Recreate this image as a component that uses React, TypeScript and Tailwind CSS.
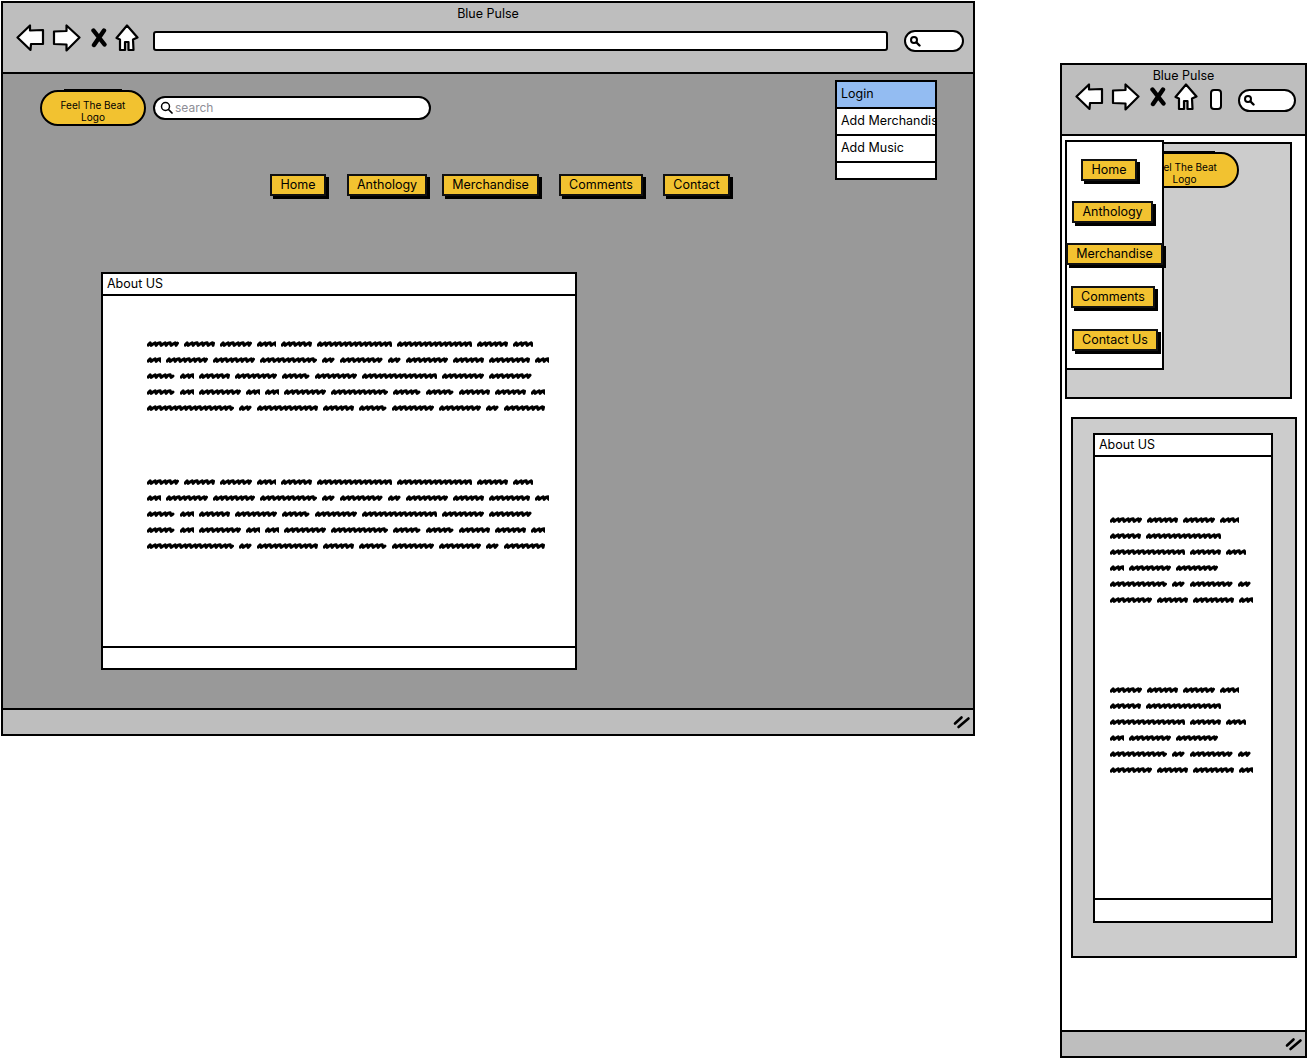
const P1 = [
  [32, 31, 32, 19, 31, 75, 75, 31, 20],
  [14, 42, 42, 57, 13, 43, 13, 42, 31, 41, 14],
  [28, 14, 31, 42, 28, 42, 75, 42, 43],
  [28, 14, 42, 14, 14, 42, 57, 28, 28, 31, 31, 14],
  [87, 13, 61, 31, 28, 42, 42, 13, 41],
];
const P2 = [
  [32, 31, 32, 19],
  [31, 75],
  [75, 31, 20],
  [14, 42, 42],
  [57, 13, 43, 13],
  [42, 31, 41, 14],
];

function Word({ w }: { w: number }) {
  let d = "M1 5.2";
  for (let x = 1; x < w - 2; x += 5) {
    const e = Math.min(x + 5, w - 1.5);
    d += ` L${x + 2.2} 2.8 L${x + 3} 5.4 L${e} ${(x % 2 === 0) ? 3.2 : 4}`;
  }
  return (
    <svg width={w} height={8} viewBox={`0 0 ${w} 8`} className="block">
      <path d={d} fill="none" stroke="#000" strokeWidth="3" strokeLinecap="round" strokeLinejoin="round" />
    </svg>
  );
}

function Scribble({ rows }: { rows: number[][] }) {
  return (
    <div className="flex flex-col gap-[8px]">
      {rows.map((r, i) => (
        <div key={i} className="flex gap-[5px]">
          {r.map((w, j) => (
            <Word key={j} w={w} />
          ))}
        </div>
      ))}
    </div>
  );
}

function Back() {
  return (
    <svg width="29" height="28" viewBox="0 0 29 28" className="block shrink-0">
      <path d="M1.5 13.5 L14 1.5 L14 6.5 L27 6 L27 20 L15 20 L14.5 26 Z" fill="#fff" stroke="#000" strokeWidth="2.2" strokeLinejoin="round" />
    </svg>
  );
}
function Forward() {
  return (
    <svg width="29" height="28" viewBox="0 0 29 28" className="block shrink-0">
      <path d="M27.5 13.5 L14.5 1.5 L14.5 7 L2 7.5 L2 20 L14.5 20.5 L14.5 26.5 Z" fill="#fff" stroke="#000" strokeWidth="2.2" strokeLinejoin="round" />
    </svg>
  );
}
function Stop() {
  return (
    <svg width="16" height="20" viewBox="0 0 16 20" className="block shrink-0">
      <path d="M2.5 2.5 L13.5 16.5 M13 2.5 L3 17" fill="none" stroke="#000" strokeWidth="4.4" strokeLinecap="round" />
    </svg>
  );
}
function Home() {
  return (
    <svg width="24" height="28" viewBox="0 0 24 28" className="block shrink-0">
      <path d="M12 1.5 L22.5 13.5 L18 15.5 L18.5 26 L13.5 26 L13.5 18 L10 18 L10 26 L5 26 L5 15.5 L1.5 14 Z" fill="#fff" stroke="#000" strokeWidth="2.2" strokeLinejoin="round" />
    </svg>
  );
}
function Addr({ className }: { className: string }) {
  return <div className={`bg-white border-2 border-black ${className}`} />;
}
function BrowserSearch({ className }: { className: string }) {
  return (
    <div className={`relative bg-white border-2 border-black rounded-full flex items-center pl-[3px] ${className}`}>
      <svg width="12" height="12" viewBox="0 0 12 12" className="block">
        <circle cx="5" cy="5" r="3" fill="none" stroke="#000" strokeWidth="2" />
        <path d="M7.5 7.5 L10.5 10.5" stroke="#000" strokeWidth="2.4" strokeLinecap="round" />
      </svg>
    </div>
  );
}
function Grip() {
  return (
    <svg width="18" height="14" viewBox="0 0 18 14" className="block">
      <path d="M2 8.5 L8.5 2.5 M5.5 12 L15.5 3.5" fill="none" stroke="#000" strokeWidth="2.6" strokeLinecap="round" />
    </svg>
  );
}
function StatusBar() {
  return (
    <div className="h-[26px] shrink-0 bg-[#bebebe] border-t-2 border-black flex items-center justify-end pr-[2px]">
      <Grip />
    </div>
  );
}
function Btn({ label, className }: { label: string; className: string }) {
  return (
    <div className={`h-[22px] shrink-0 flex items-center justify-center bg-[#f2c230] border-2 border-[#111] shadow-[3px_3px_0_#000] text-[12.5px] leading-none text-black ${className}`}>
      {label}
    </div>
  );
}
function Logo({ className }: { className: string }) {
  return (
    <div className={`relative h-[36px] bg-[#f2c230] border-2 border-black rounded-[18px] flex flex-col items-center justify-center pt-[6px] text-[10px] leading-[12px] text-black ${className}`}>
      <span className="absolute top-[-3px] left-[22px] right-[22px] h-[1px] bg-black" />
      <span>Feel The Beat</span>
      <span>Logo</span>
    </div>
  );
}
function MenuItem({ label, className }: { label: string; className: string }) {
  return (
    <div className={`h-[27px] px-[4px] flex items-center overflow-hidden whitespace-nowrap border-b-2 border-black text-[12.5px] text-black ${className}`}>
      {label}
    </div>
  );
}
function AboutTitle() {
  return (
    <div className="h-[22px] shrink-0 bg-white border-b-2 border-black pl-[4px] pt-[1px] flex items-center text-[12.5px] text-black">
      About US
    </div>
  );
}

export default function App() {
  return (
    <div className="relative w-[1308px] h-[1059px] bg-white overflow-hidden font-['Inter',sans-serif]">
      {/* Desktop window */}
      <div className="absolute left-[1px] top-[1px] w-[974px] h-[735px] border-2 border-black flex flex-col">
        <div className="h-[71px] shrink-0 bg-[#bebebe] border-b-2 border-black">
          <div className="pt-[3px] h-[20px] text-center text-[12.5px] leading-[15px] text-black">Blue Pulse</div>
          <div className="flex items-center pl-[13px] h-[28px] mt-[1px]">
            <Back />
            <div className="ml-[7px]"><Forward /></div>
            <div className="ml-[10px]"><Stop /></div>
            <div className="ml-[8px]"><Home /></div>
            <Addr className="ml-[14px] mt-[5px] w-[735px] h-[20px] rounded-[3px]" />
            <BrowserSearch className="ml-[16px] mt-[5px] w-[60px] h-[22px]" />
          </div>
        </div>
        <div className="relative flex-1 bg-[#999999] flex flex-col">
          <div className="flex items-start pt-[16px] pl-[37px] h-[100px]">
            <Logo className="w-[106px]" />
            <div className="ml-[7px] mt-[6px] w-[278px] h-[24px] bg-white border-2 border-black rounded-full flex items-center pl-[5px] gap-[2px] text-[12px] leading-none pb-[1px] text-[#8e8e96]">
              <svg width="13" height="13" viewBox="0 0 13 13" className="block">
                <circle cx="5.5" cy="5.5" r="4" fill="none" stroke="#000" strokeWidth="1.5" />
                <path d="M8.5 8.5 L12 12" stroke="#000" strokeWidth="1.7" strokeLinecap="round" />
              </svg>
              <span>search</span>
            </div>
          </div>
          <div className="absolute left-[832px] top-[6px] w-[102px] h-[100px] border-2 border-black flex flex-col">
            <MenuItem label="Login" className="bg-[#93bcf2]" />
            <MenuItem label="Add Merchandise" className="bg-white" />
            <MenuItem label="Add Music" className="bg-white" />
            <div className="flex-1 bg-white" />
          </div>
          <div className="flex pl-[267px]">
            <Btn label="Home" className="w-[56px]" />
            <Btn label="Anthology" className="ml-[21px] w-[80px]" />
            <Btn label="Merchandise" className="ml-[15px] w-[97px]" />
            <Btn label="Comments" className="ml-[20px] w-[84px]" />
            <Btn label="Contact" className="ml-[20px] w-[67px]" />
          </div>
          <div className="ml-[98px] mt-[76px] w-[476px] h-[398px] bg-white border-2 border-black flex flex-col">
            <AboutTitle />
            <div className="flex-1 pl-[44px] pt-[44px] flex flex-col gap-[66px]">
              <Scribble rows={P1} />
              <Scribble rows={P1} />
            </div>
            <div className="h-[22px] shrink-0 border-t-2 border-black" />
          </div>
        </div>
        <StatusBar />
      </div>

      {/* Mobile window */}
      <div className="absolute left-[1060px] top-[63px] w-[247px] h-[995px] border-2 border-black flex flex-col">
        <div className="h-[71px] shrink-0 bg-[#bebebe] border-b-2 border-black">
          <div className="pt-[3px] h-[18px] text-center text-[12.5px] leading-[15px] text-black">Blue Pulse</div>
          <div className="flex items-center pl-[13px] h-[28px]">
            <Back />
            <div className="ml-[7px]"><Forward /></div>
            <div className="ml-[10px]"><Stop /></div>
            <div className="ml-[8px]"><Home /></div>
            <div className="ml-[12px] mt-[5px] w-[12px] h-[21px] bg-white border-2 border-black rounded-[4px]" />
            <BrowserSearch className="ml-[16px] mt-[6px] w-[58px] h-[23px]" />
          </div>
        </div>
        <div className="relative flex-1 bg-white flex flex-col">
          <div className="ml-[3px] mt-[6px] w-[227px] h-[257px] bg-[#cccccc] border-2 border-black pt-[8px] pl-[63px]">
            <Logo className="w-[109px]" />
          </div>
          <div className="absolute left-[3px] top-[4px] w-[99px] h-[230px] bg-white border-2 border-black flex flex-col">
            <Btn label="Home" className="ml-[14px] mt-[17px] w-[56px]" />
            <Btn label="Anthology" className="ml-[5px] mt-[20px] w-[81px]" />
            <Btn label="Merchandise" className="ml-[-1px] mt-[20px] w-[97px]" />
            <Btn label="Comments" className="ml-[4px] mt-[21px] w-[84px]" />
            <Btn label="Contact Us" className="ml-[5px] mt-[21px] w-[86px]" />
          </div>
          <div className="ml-[9px] mt-[18px] w-[226px] h-[541px] bg-[#cccccc] border-2 border-black pt-[14px] pl-[20px]">
            <div className="w-[180px] h-[490px] bg-white border-2 border-black flex flex-col">
              <AboutTitle />
              <div className="flex-1 pl-[15px] pt-[59px] flex flex-col gap-[82px]">
                <Scribble rows={P2} />
                <Scribble rows={P2} />
              </div>
              <div className="h-[23px] shrink-0 border-t-2 border-black" />
            </div>
          </div>
        </div>
        <StatusBar />
      </div>
    </div>
  );
}
